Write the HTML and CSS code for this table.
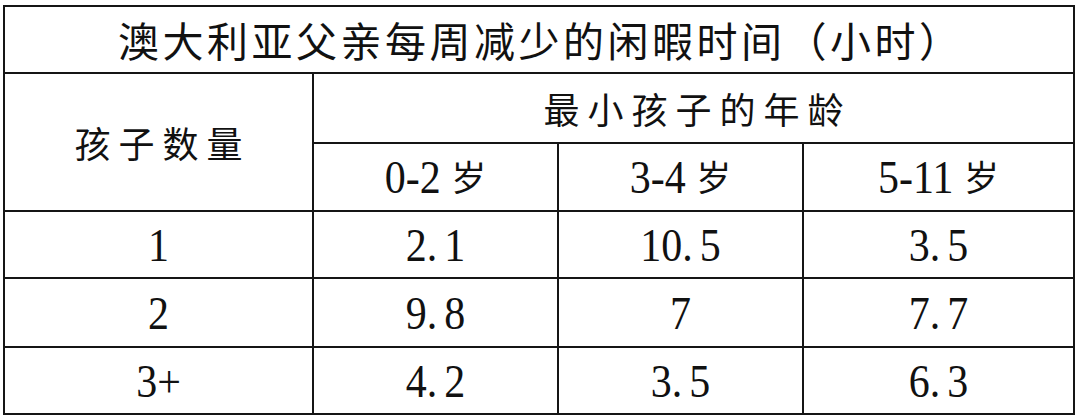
FILE: index.html
```html
<!DOCTYPE html>
<html lang="zh-CN">
<head>
<meta charset="utf-8">
<title>澳大利亚父亲每周减少的闲暇时间</title>
<link rel="stylesheet" href="styles.css">
</head>
<body>
<div class="wrap">
<table class="data">
  <colgroup>
    <col class="c1"><col class="c2"><col class="c3"><col class="c4">
  </colgroup>
  <tr class="r-title"><th colspan="4" class="title"><span class="sp-t">澳大利亚父亲每周减少的闲暇时间（小时）</span></th></tr>
  <tr class="r-h1">
    <th rowspan="2" class="hd"><span class="sp-h">孩子数量</span></th>
    <th colspan="3" class="hd"><span class="sp-h">最小孩子的年龄</span></th>
  </tr>
  <tr class="r-h2">
    <th class="num"><span class="tall">0-2</span> <span class="cjk">岁</span></th>
    <th class="num"><span class="tall">3-4</span> <span class="cjk">岁</span></th>
    <th class="num"><span class="tall">5-11</span> <span class="cjk">岁</span></th>
  </tr>
  <tr class="r-d1">
    <td class="num"><span class="tall">1</span></td>
    <td class="num"><span class="tall">2<span class="dot">.</span>1</span></td>
    <td class="num"><span class="tall">10<span class="dot">.</span>5</span></td>
    <td class="num"><span class="tall">3<span class="dot">.</span>5</span></td>
  </tr>
  <tr class="r-d2">
    <td class="num"><span class="tall">2</span></td>
    <td class="num"><span class="tall">9<span class="dot">.</span>8</span></td>
    <td class="num"><span class="tall">7</span></td>
    <td class="num"><span class="tall">7<span class="dot">.</span>7</span></td>
  </tr>
  <tr class="r-d3">
    <td class="num"><span class="tall">3+</span></td>
    <td class="num"><span class="tall">4<span class="dot">.</span>2</span></td>
    <td class="num"><span class="tall">3<span class="dot">.</span>5</span></td>
    <td class="num"><span class="tall">6<span class="dot">.</span>3</span></td>
  </tr>
</table>
</div>
</body>
</html>
```
FILE: styles.css
```css
html, body {
  margin: 0;
  padding: 0;
  background: #ffffff;
}
.wrap {
  padding: 5px 0 0 3px;
}
.data {
  border-collapse: collapse;
  table-layout: fixed;
  width: 1072px;
  color: #111111;
  font-family: "Liberation Serif", "Noto Sans CJK SC", serif;
}
.c1 { width: 309px; }
.c2 { width: 245px; }
.c3 { width: 245px; }
.c4 { width: 271px; }
.data th, .data td {
  border: 2px solid #151515;
  padding: 0;
  text-align: center;
  vertical-align: middle;
  font-weight: normal;
}
.r-title { height: 67px; }
.r-h1 { height: 70px; }
.r-h2 { height: 68px; }
.r-d1 { height: 67px; }
.r-d2 { height: 69px; }
.r-d3 { height: 67px; }
.title {
  font-family: "Noto Sans CJK SC", sans-serif;
  font-size: 41px;
  line-height: 1;
  font-weight: 500;
}
.sp-t {
  letter-spacing: 3.5px;
  margin-right: -3.5px;
}
.hd {
  font-family: "Noto Sans CJK SC", sans-serif;
  font-size: 36px;
  line-height: 1;
}
.sp-h {
  letter-spacing: 8px;
  margin-right: -8px;
}
.num {
  font-family: "Liberation Serif", serif;
  font-size: 42px;
  line-height: 1;
}
.tall {
  display: inline-block;
  transform: scaleY(1.12);
}
.cjk {
  font-family: "Noto Sans CJK SC", sans-serif;
  font-size: 35px;
}
.dot {
  margin-right: 7px;
}
```
